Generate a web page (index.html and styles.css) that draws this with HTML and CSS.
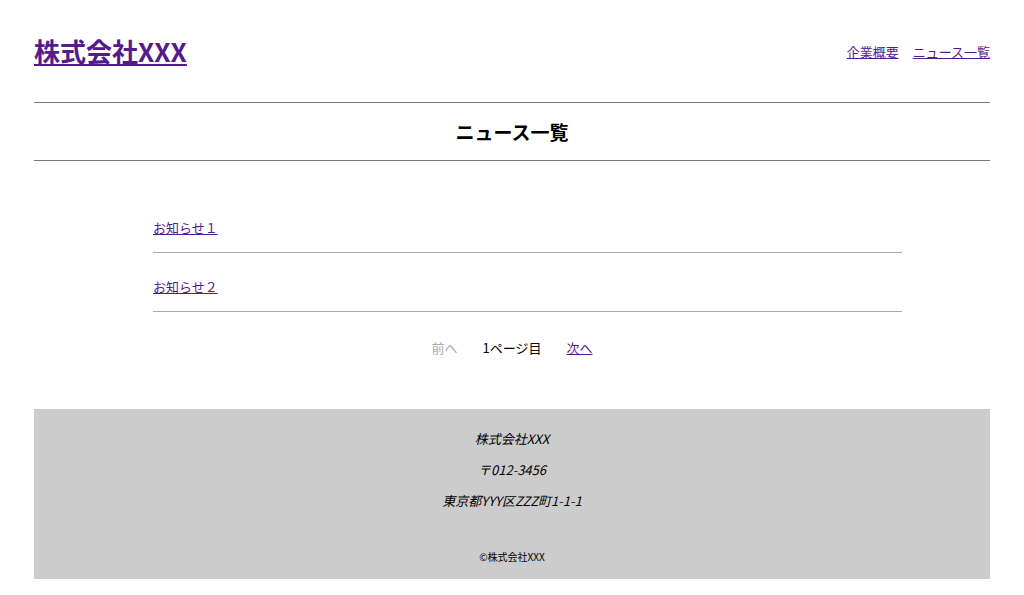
FILE: index.html
```html
<!DOCTYPE html>
<html lang="ja">
<head>
    <meta charset="UTF-8">
    <meta name="viewport" content="width=device-width, initial-scale=1.0">
    <title>ニュース一覧 | 株式会社XXX</title>
    <link rel="stylesheet" href="styles.css">
</head>
<body>
    <div class="wrapper">
        <header class="site-header">
            <h1 class="logo"><a href="#">株式会社XXX</a></h1>
            <nav class="global-nav">
                <a href="#">企業概要</a>
                <a href="#">ニュース一覧</a>
            </nav>
        </header>

        <div class="page-title">
            <h2>ニュース一覧</h2>
        </div>

        <main>
            <ul class="news-list">
                <li><a href="#">お知らせ１</a></li>
                <li><a href="#">お知らせ２</a></li>
            </ul>
            <div class="pager">
                <span class="disabled">前へ</span>
                <span>1ページ目</span>
                <a href="#">次へ</a>
            </div>
        </main>

        <footer class="site-footer">
            <address>
                <p>株式会社XXX</p>
                <p>〒012-3456</p>
                <p>東京都YYY区ZZZ町1-1-1</p>
            </address>
            <small>©株式会社XXX</small>
        </footer>
    </div>
</body>
</html>
```

FILE: styles.css
```css
body {
    margin: 0;
    color: #000;
    background-color: #fff;
    font-family: "Noto Sans CJK JP", "Noto Sans", sans-serif;
    font-size: 13px;
}

a {
    color: #551a8b;
}

.wrapper {
    padding: 0 34px;
}

.site-header {
    display: flex;
    justify-content: space-between;
    align-items: center;
    height: 102px;
    border-bottom: 1px solid #777;
}

.logo {
    margin: 0;
    font-size: 26px;
    line-height: 1;
}

.global-nav {
    display: flex;
    gap: 14px;
}

.page-title {
    border-bottom: 1px solid #777;
    height: 57px;
    display: flex;
    align-items: center;
    justify-content: center;
}

.page-title h2 {
    margin: 0;
    font-size: 19px;
}

main {
    padding-top: 33px;
}

.news-list {
    list-style: none;
    margin: 0 88px 0 119px;
    padding: 0;
}

.news-list li {
    height: 59px;
    box-sizing: border-box;
    padding-top: 24px;
    line-height: 20px;
    border-bottom: 1px solid #aaa;
}

.pager {
    display: flex;
    justify-content: center;
    gap: 25px;
    padding: 26px 0 51px;
    line-height: 20px;
}

.disabled {
    color: #aaa;
}

.site-footer {
    background-color: #ccc;
    text-align: center;
    padding: 14px 0 15px;
}

.site-footer address {
    margin: 0;
}

.site-footer p {
    margin: 0;
    line-height: 31px;
}

.site-footer small {
    display: block;
    margin-top: 34px;
    font-size: 10px;
    line-height: 14px;
}
```
